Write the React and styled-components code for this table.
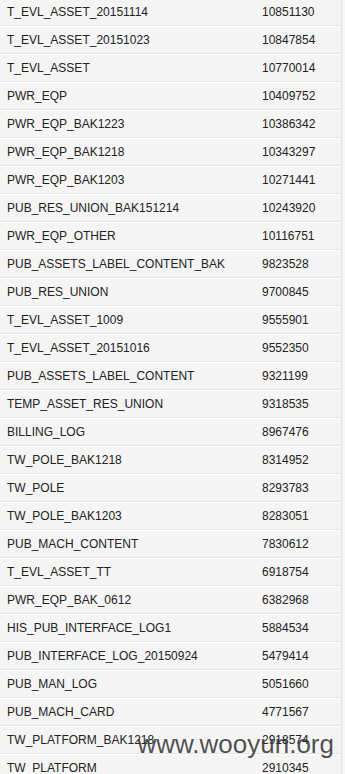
import React from "react"
import styled, { createGlobalStyle } from "styled-components"

const GlobalStyle = createGlobalStyle`
    html, body {
        margin: 0;
        padding: 0;
        background: #f6f6f6;
        overflow: hidden;
    }
`

const Page = styled.div`
    position: relative;
    width: 345px;
    height: 774px;
    overflow: hidden;
    font-family: "Liberation Sans", Arial, sans-serif;
    font-size: 12px;
    color: #222;
`

const Table = styled.div`
    margin-top: -2px;
    width: 341px;
    border-right: 1px solid #e4e4e4;
`

const Row = styled.div`
    display: grid;
    grid-template-columns: 255px 1fr;
    align-items: center;
    height: 26px;
    background: #f5f5f5;
    border-top: 1px solid #ffffff;
    border-bottom: 1px solid #e3e3e3;
`

const Cell = styled.div`
    padding-left: 7px;
    white-space: nowrap;
`

const Watermark = styled.div`
    position: absolute;
    right: 11px;
    bottom: 17px;
    font-family: "Liberation Sans", Arial, sans-serif;
    font-size: 26px;
    line-height: 26px;
    color: rgba(50, 50, 50, 0.85);
`

const rows = [
    ["T_EVL_ASSET_20151114", "10851130"],
    ["T_EVL_ASSET_20151023", "10847854"],
    ["T_EVL_ASSET", "10770014"],
    ["PWR_EQP", "10409752"],
    ["PWR_EQP_BAK1223", "10386342"],
    ["PWR_EQP_BAK1218", "10343297"],
    ["PWR_EQP_BAK1203", "10271441"],
    ["PUB_RES_UNION_BAK151214", "10243920"],
    ["PWR_EQP_OTHER", "10116751"],
    ["PUB_ASSETS_LABEL_CONTENT_BAK", "9823528"],
    ["PUB_RES_UNION", "9700845"],
    ["T_EVL_ASSET_1009", "9555901"],
    ["T_EVL_ASSET_20151016", "9552350"],
    ["PUB_ASSETS_LABEL_CONTENT", "9321199"],
    ["TEMP_ASSET_RES_UNION", "9318535"],
    ["BILLING_LOG", "8967476"],
    ["TW_POLE_BAK1218", "8314952"],
    ["TW_POLE", "8293783"],
    ["TW_POLE_BAK1203", "8283051"],
    ["PUB_MACH_CONTENT", "7830612"],
    ["T_EVL_ASSET_TT", "6918754"],
    ["PWR_EQP_BAK_0612", "6382968"],
    ["HIS_PUB_INTERFACE_LOG1", "5884534"],
    ["PUB_INTERFACE_LOG_20150924", "5479414"],
    ["PUB_MAN_LOG", "5051660"],
    ["PUB_MACH_CARD", "4771567"],
    ["TW_PLATFORM_BAK1218", "2918574"],
    ["TW_PLATFORM", "2910345"],
]

export default function App() {
    return (
        <Page>
            <GlobalStyle />
            <Table>
                {rows.map(([name, count]) => (
                    <Row key={name}>
                        <Cell>{name}</Cell>
                        <Cell>{count}</Cell>
                    </Row>
                ))}
            </Table>
            <Watermark>www.wooyun.org</Watermark>
        </Page>
    )
}
